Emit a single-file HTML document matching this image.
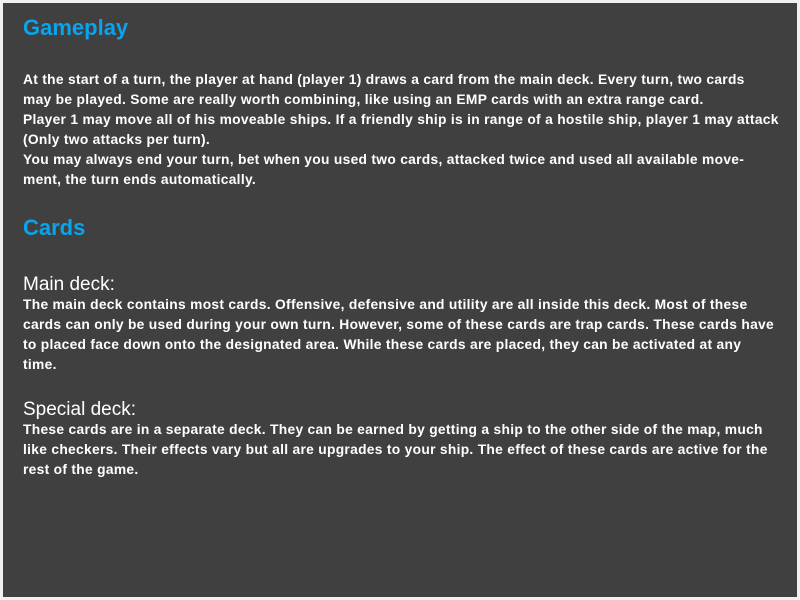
<!DOCTYPE html>
<html><head><meta charset="utf-8"><style>
html,body{margin:0;padding:0;background:#f0f0f0;width:800px;height:600px;overflow:hidden}
#p{position:absolute;left:3px;top:3px;width:794px;height:594px;background:#404040}
.t{position:absolute;left:23px;white-space:nowrap;color:#fff;font-family:"Liberation Sans",sans-serif;font-weight:bold;font-size:13.8px;letter-spacing:0.3px;line-height:20px}
.h{position:absolute;left:23px;color:#0aa3ee;font-family:"Liberation Sans",sans-serif;font-weight:bold;font-size:22px;line-height:24px}
.s{position:absolute;left:23px;color:#fff;font-family:"Liberation Sans",sans-serif;font-size:19px;line-height:20px}
</style></head><body><div id="p"></div>
<div class="h" style="top:16px">Gameplay</div>
<div class="t" style="top:70px">At the start of a turn, the player at hand (player 1) draws a card from the main deck. Every turn, two cards</div>
<div class="t" style="top:90px">may be played. Some are really worth combining, like using an EMP cards with an extra range card.</div>
<div class="t" style="top:110px">Player 1 may move all of his moveable ships. If a friendly ship is in range of a hostile ship, player 1 may attack</div>
<div class="t" style="top:130px">(Only two attacks per turn).</div>
<div class="t" style="top:150px">You may always end your turn, bet when you used two cards, attacked twice and used all available move-</div>
<div class="t" style="top:170px">ment, the turn ends automatically.</div>
<div class="h" style="top:216px">Cards</div>
<div class="s" style="top:275px">Main deck:</div>
<div class="t" style="top:295px">The main deck contains most cards. Offensive, defensive and utility are all inside this deck. Most of these</div>
<div class="t" style="top:315px">cards can only be used during your own turn. However, some of these cards are trap cards. These cards have</div>
<div class="t" style="top:335px">to placed face down onto the designated area. While these cards are placed, they can be activated at any</div>
<div class="t" style="top:355px">time.</div>
<div class="s" style="top:400px">Special deck:</div>
<div class="t" style="top:420px">These cards are in a separate deck. They can be earned by getting a ship to the other side of the map, much</div>
<div class="t" style="top:440px">like checkers. Their effects vary but all are upgrades to your ship. The effect of these cards are active for the</div>
<div class="t" style="top:460px">rest of the game.</div>
</body></html>
